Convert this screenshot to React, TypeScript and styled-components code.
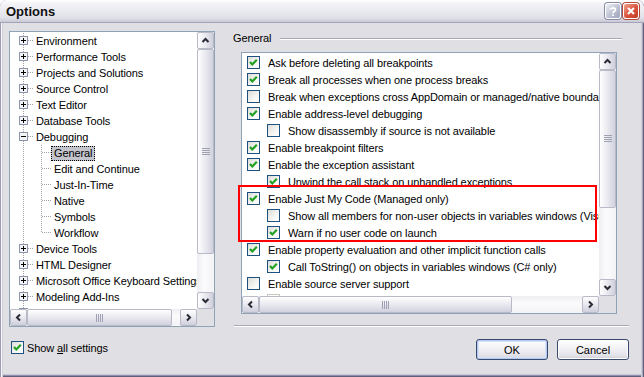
import React from "react";
import styled, { createGlobalStyle } from "styled-components";

const GlobalStyle = createGlobalStyle`
  html, body { margin: 0; padding: 0; background: #fff; }
  body {
    font-family: "Liberation Sans", Arial, sans-serif;
    font-size: 11px;
    letter-spacing: -0.1px;
    color: #000;
  }
`;

const FACE = "#e0dfe3";
const FIELD_BORDER = "#8ea2b8";

const Window = styled.div`
  width: 644px;
  height: 377px;
  box-sizing: border-box;
  display: flex;
  flex-direction: column;
  background: ${FACE};
  border-radius: 7px 7px 0 0;
  overflow: hidden;
  box-shadow: inset 1px 0 0 #9d9db4, inset 2px 0 0 #f6f6f9, inset 3px 0 0 #d2d2dc,
    inset -1px 0 0 #5f5f7c, inset -2px 0 0 #a9a9be, inset -3px 0 0 #cfcfdb,
    inset 0 -1px 0 #5f5f7c, inset 0 -2px 0 #8e8ea8, inset 0 -3px 0 #c8c8d6;
`;

const TitleBar = styled.div`
  height: 22px;
  flex: none;
  display: flex;
  align-items: center;
  padding: 0 5px 0 6px;
  background: linear-gradient(
    to bottom,
    #ffffff 0,
    #f5f5f8 3px,
    #ebebf1 45%,
    #e1e1e9 80%,
    #c9c9d6 100%
  );
  border-bottom: 1px solid #a4a4b8;
`;

const Title = styled.div`
  flex: 1;
  font-family: "Liberation Sans", Arial, sans-serif;
  font-weight: bold;
  font-size: 13px;
  letter-spacing: 0;
  color: #111;
`;

const CaptionButton = styled.div<{ $tone: "help" | "close" }>`
  width: 16px;
  height: 16px;
  margin-left: 2px;
  box-sizing: border-box;
  border: 1px solid #fff;
  border-radius: 3px;
  display: flex;
  align-items: center;
  justify-content: center;
  background: ${(p) =>
    p.$tone === "close"
      ? "linear-gradient(135deg, #f0a08c, #d9533c 55%, #c23a26)"
      : "linear-gradient(135deg, #eef0f6, #b8bccf 60%, #9ea3bb)"};
  box-shadow: 0 0 0 1px ${(p) => (p.$tone === "close" ? "#b44a3a" : "#8589a2")};
`;

const Body = styled.div`
  display: grid;
  grid-template-columns: 206px 396px;
  grid-template-rows: 296px auto;
  column-gap: 18px;
  padding: 8px 0 0 9px;
`;

/* ---------- scrollbars ---------- */

const Bar = styled.div<{ $vertical?: boolean }>`
  display: flex;
  flex-direction: ${(p) => (p.$vertical ? "column" : "row")};
  background: ${(p) =>
    p.$vertical
      ? "linear-gradient(to right, #eeeef2, #fbfbfc 40%, #f3f3f6)"
      : "linear-gradient(to bottom, #eeeef2, #fbfbfc 40%, #f3f3f6)"};
`;

const ArrowButton = styled.div<{ $vertical?: boolean }>`
  width: 17px;
  height: 17px;
  flex: none;
  box-sizing: border-box;
  border: 1px solid #b9bac8;
  border-radius: 2px;
  display: flex;
  align-items: center;
  justify-content: center;
  background: linear-gradient(
    ${(p) => (p.$vertical ? "to right" : "to bottom")},
    #ffffff,
    #e8e8ef 50%,
    #cfcfdc
  );
`;

const Track = styled.div<{ $vertical?: boolean }>`
  flex: 1;
  display: flex;
  flex-direction: ${(p) => (p.$vertical ? "column" : "row")};
`;

const Thumb = styled.div<{ $vertical?: boolean; $size: number; $offset: number }>`
  flex: none;
  box-sizing: border-box;
  ${(p) =>
    p.$vertical
      ? `height: ${p.$size}px; margin-top: ${p.$offset}px;`
      : `width: ${p.$size}px; margin-left: ${p.$offset}px;`}
  border: 1px solid #b9bac8;
  border-radius: 2px;
  display: flex;
  align-items: center;
  justify-content: center;
  background: linear-gradient(
    ${(p) => (p.$vertical ? "to right" : "to bottom")},
    #ffffff,
    #ebebf1 45%,
    #d2d2df
  );
`;

const Corner = styled.div`
  background: ${FACE};
`;

type Dir = "up" | "down" | "left" | "right";

function Arrow({ dir }: { dir: Dir }) {
  const pts: Record<Dir, string> = {
    up: "1.5,6 4.5,3 7.5,6",
    down: "1.5,3 4.5,6 7.5,3",
    left: "6,1.5 3,4.5 6,7.5",
    right: "3,1.5 6,4.5 3,7.5",
  };
  return (
    <svg width="9" height="9" viewBox="0 0 9 9">
      <polyline points={pts[dir]} fill="none" stroke="#2b2b38" strokeWidth="2" />
    </svg>
  );
}

function Grip({ vertical }: { vertical?: boolean }) {
  const lines = [0, 2, 4, 6];
  return vertical ? (
    <svg width="8" height="8" viewBox="0 0 8 8" shapeRendering="crispEdges">
      {lines.map((y) => (
        <line key={y} x1="0" x2="8" y1={y + 0.5} y2={y + 0.5} stroke="#9fa0b4" />
      ))}
    </svg>
  ) : (
    <svg width="8" height="8" viewBox="0 0 8 8" shapeRendering="crispEdges">
      {lines.map((x) => (
        <line key={x} y1="0" y2="8" x1={x + 0.5} x2={x + 0.5} stroke="#9fa0b4" />
      ))}
    </svg>
  );
}

function ScrollBar({
  vertical,
  thumbSize,
  thumbOffset = 0,
}: {
  vertical?: boolean;
  thumbSize: number;
  thumbOffset?: number;
}) {
  return (
    <Bar $vertical={vertical}>
      <ArrowButton $vertical={vertical}>
        <Arrow dir={vertical ? "up" : "left"} />
      </ArrowButton>
      <Track $vertical={vertical}>
        <Thumb $vertical={vertical} $size={thumbSize} $offset={thumbOffset}>
          <Grip vertical={vertical} />
        </Thumb>
      </Track>
      <ArrowButton $vertical={vertical}>
        <Arrow dir={vertical ? "down" : "right"} />
      </ArrowButton>
    </Bar>
  );
}

/* ---------- tree ---------- */

const Tree = styled.div`
  box-sizing: border-box;
  height: 296px;
  border: 1px solid ${FIELD_BORDER};
  background: #fff;
  display: grid;
  grid-template-columns: 1fr 17px;
  grid-template-rows: 1fr 17px;
`;

const TreeViewport = styled.div`
  overflow: hidden;
  padding-top: 1px;
`;

const TreeRow = styled.div`
  height: 16px;
  display: flex;
  align-items: center;
  white-space: nowrap;
`;

const NodeLabel = styled.span<{ $selected?: boolean }>`
  height: 15px;
  line-height: 13px;
  box-sizing: border-box;
  padding: 0 2px;
  border: 1px dotted ${(p) => (p.$selected ? "#000" : "transparent")};
  background: ${(p) => (p.$selected ? "#c4c4cc" : "transparent")};
`;

type Node = {
  label: string;
  level: 0 | 1;
  state?: "plus" | "minus";
  last?: boolean;
  selected?: boolean;
};

function TreeGutter({ node }: { node: Node }) {
  const dot = { stroke: "#a3a3a3", strokeDasharray: "1 1" };
  if (node.level === 0) {
    return (
      <svg width="23" height="16" shapeRendering="crispEdges" style={{ flex: "none" }}>
        <line x1="13.5" x2="13.5" y1="0" y2="16" {...dot} />
        <line x1="18" x2="23" y1="7.5" y2="7.5" {...dot} />
        <rect x="9.5" y="3.5" width="8" height="8" fill="#f4f4f6" stroke="#8a95a8" />
        <line x1="11" x2="16" y1="7.5" y2="7.5" stroke="#000" />
        {node.state === "plus" && <line x1="13.5" x2="13.5" y1="5" y2="10" stroke="#000" />}
      </svg>
    );
  }
  return (
    <svg width="41" height="16" shapeRendering="crispEdges" style={{ flex: "none" }}>
      <line x1="13.5" x2="13.5" y1="0" y2="16" {...dot} />
      <line x1="31.5" x2="31.5" y1="0" y2={node.last ? 8 : 16} {...dot} />
      <line x1="32" x2="41" y1="7.5" y2="7.5" {...dot} />
    </svg>
  );
}

const nodes: Node[] = [
  { label: "Environment", level: 0, state: "plus" },
  { label: "Performance Tools", level: 0, state: "plus" },
  { label: "Projects and Solutions", level: 0, state: "plus" },
  { label: "Source Control", level: 0, state: "plus" },
  { label: "Text Editor", level: 0, state: "plus" },
  { label: "Database Tools", level: 0, state: "plus" },
  { label: "Debugging", level: 0, state: "minus" },
  { label: "General", level: 1, selected: true },
  { label: "Edit and Continue", level: 1 },
  { label: "Just-In-Time", level: 1 },
  { label: "Native", level: 1 },
  { label: "Symbols", level: 1 },
  { label: "Workflow", level: 1, last: true },
  { label: "Device Tools", level: 0, state: "plus" },
  { label: "HTML Designer", level: 0, state: "plus" },
  { label: "Microsoft Office Keyboard Settings", level: 0, state: "plus" },
  { label: "Modeling Add-Ins", level: 0, state: "plus" },
  { label: "Office Tools", level: 0, state: "plus" },
];

/* ---------- checkboxes ---------- */

const Box = styled.span<{ $disabled?: boolean }>`
  width: 13px;
  height: 13px;
  flex: none;
  box-sizing: border-box;
  border: 1px solid ${(p) => (p.$disabled ? "#c9c8c0" : "#1c5180")};
  background: ${(p) =>
    p.$disabled ? "#fff" : "linear-gradient(135deg, #dcdcd7 0%, #f6f6f4 60%, #ffffff 100%)"};
  display: flex;
  align-items: center;
  justify-content: center;
`;

function CheckBox({ checked, disabled }: { checked?: boolean; disabled?: boolean }) {
  return (
    <Box $disabled={disabled}>
      {checked && (
        <svg width="11" height="11" viewBox="0 0 11 11">
          <polyline points="2,5 4.3,7.5 8.8,2.8" fill="none" stroke="#21a121" strokeWidth="2.2" />
        </svg>
      )}
    </Box>
  );
}

const SettingRow = styled.label`
  display: flex;
  align-items: center;
  gap: 3px;
  margin-top: 14px;
  margin-left: 2px;
  height: 13px;
`;

/* ---------- right panel ---------- */

const Panel = styled.div`
  display: flex;
  flex-direction: column;
`;

const GroupHeader = styled.div`
  height: 14px;
  display: flex;
  align-items: center;
`;

const GroupRule = styled.div`
  flex: 1;
  margin: 1px 7px 0 9px;
  border-top: 1px solid #a9a9b5;
  border-bottom: 1px solid #fff;
`;

const ListFrame = styled.div`
  position: relative;
  margin: 7px 0 0 8px;
  width: 376px;
  height: 262px;
`;

const ListBox = styled.div`
  box-sizing: border-box;
  height: 100%;
  border: 1px solid ${FIELD_BORDER};
  background: #fff;
  display: grid;
  grid-template-columns: 1fr 17px;
  grid-template-rows: 1fr 17px;
`;

const ListViewport = styled.div`
  overflow: hidden;
  padding-top: 1px;
`;

const OptionRow = styled.div<{ $indent: number }>`
  height: 17px;
  display: flex;
  align-items: center;
  gap: 8px;
  padding-left: ${(p) => 5 + p.$indent * 20}px;
  white-space: nowrap;
`;

const Highlight = styled.div`
  position: absolute;
  left: -3px;
  top: 133px;
  width: 359px;
  height: 57px;
  box-sizing: border-box;
  border: 2px solid #ff0000;
  pointer-events: none;
`;

const Separator = styled.div`
  margin: 11px 0 0 1px;
  border-top: 1px solid #a9a9b5;
  border-bottom: 1px solid #fff;
`;

const ButtonRow = styled.div`
  display: flex;
  justify-content: flex-end;
  gap: 9px;
  margin-top: 12px;
`;

const PushButton = styled.button<{ $default?: boolean }>`
  width: 72px;
  height: 21px;
  padding: 0;
  font-family: "Liberation Sans", Arial, sans-serif;
  font-size: 11px;
  color: #000;
  border: 1px solid #3a4a6e;
  border-radius: 3px;
  background: linear-gradient(to bottom, #ffffff 0, #f3f3f6 40%, #e4e3ea 80%, #cfcfd9 100%);
  box-shadow: ${(p) =>
    p.$default ? "inset 0 0 0 1px #b3c8ee, inset 0 0 0 2px #d6e2f6" : "inset 0 0 0 1px #fff"};
`;

type Option = { text: string; checked?: boolean; indent?: number; disabled?: boolean };

const options: Option[] = [
  { text: "Ask before deleting all breakpoints", checked: true },
  { text: "Break all processes when one process breaks", checked: true },
  { text: "Break when exceptions cross AppDomain or managed/native boundaries" },
  { text: "Enable address-level debugging", checked: true },
  { text: "Show disassembly if source is not available", indent: 1 },
  { text: "Enable breakpoint filters", checked: true },
  { text: "Enable the exception assistant", checked: true },
  { text: "Unwind the call stack on unhandled exceptions", checked: true, indent: 1 },
  { text: "Enable Just My Code (Managed only)", checked: true },
  { text: "Show all members for non-user objects in variables windows (Visual Basic only)", indent: 1 },
  { text: "Warn if no user code on launch", checked: true, indent: 1 },
  { text: "Enable property evaluation and other implicit function calls", checked: true },
  { text: "Call ToString() on objects in variables windows (C# only)", checked: true, indent: 1 },
  { text: "Enable source server support" },
  { text: "Print source server diagnostic messages to the Output window", indent: 1, disabled: true },
];

export default function App() {
  return (
    <>
      <GlobalStyle />
      <Window>
        <TitleBar>
          <Title>Options</Title>
          <CaptionButton $tone="help">
            <svg width="10" height="11" viewBox="0 0 10 11">
              <path
                d="M2.5 3.6 C2.5 1.6 7.5 1.4 7.5 3.6 C7.5 5.3 5 5.2 5 7.2"
                fill="none"
                stroke="#fff"
                strokeWidth="1.8"
              />
              <rect x="4.1" y="8.3" width="1.8" height="1.8" fill="#fff" />
            </svg>
          </CaptionButton>
          <CaptionButton $tone="close">
            <svg width="10" height="10" viewBox="0 0 10 10">
              <path d="M2 2 L8 8 M8 2 L2 8" stroke="#fff" strokeWidth="2" />
            </svg>
          </CaptionButton>
        </TitleBar>

        <Body>
          <Tree>
            <TreeViewport>
              {nodes.map((n) => (
                <TreeRow key={n.label}>
                  <TreeGutter node={n} />
                  <NodeLabel $selected={n.selected}>{n.label}</NodeLabel>
                </TreeRow>
              ))}
            </TreeViewport>
            <ScrollBar vertical thumbSize={205} />
            <ScrollBar thumbSize={145} />
            <Corner />
          </Tree>

          <Panel>
            <GroupHeader>
              General
              <GroupRule />
            </GroupHeader>
            <ListFrame>
              <ListBox>
                <ListViewport>
                  {options.map((o) => (
                    <OptionRow key={o.text} $indent={o.indent ?? 0}>
                      <CheckBox checked={o.checked} disabled={o.disabled} />
                      {o.text}
                    </OptionRow>
                  ))}
                </ListViewport>
                <ScrollBar vertical thumbSize={138} />
                <ScrollBar thumbSize={253} />
                <Corner />
              </ListBox>
              <Highlight />
            </ListFrame>
            <Separator />
          </Panel>

          <SettingRow>
            <CheckBox checked />
            <span>
              Show <u>a</u>ll settings
            </span>
          </SettingRow>

          <ButtonRow>
            <PushButton $default>OK</PushButton>
            <PushButton>Cancel</PushButton>
          </ButtonRow>
        </Body>
      </Window>
    </>
  );
}
